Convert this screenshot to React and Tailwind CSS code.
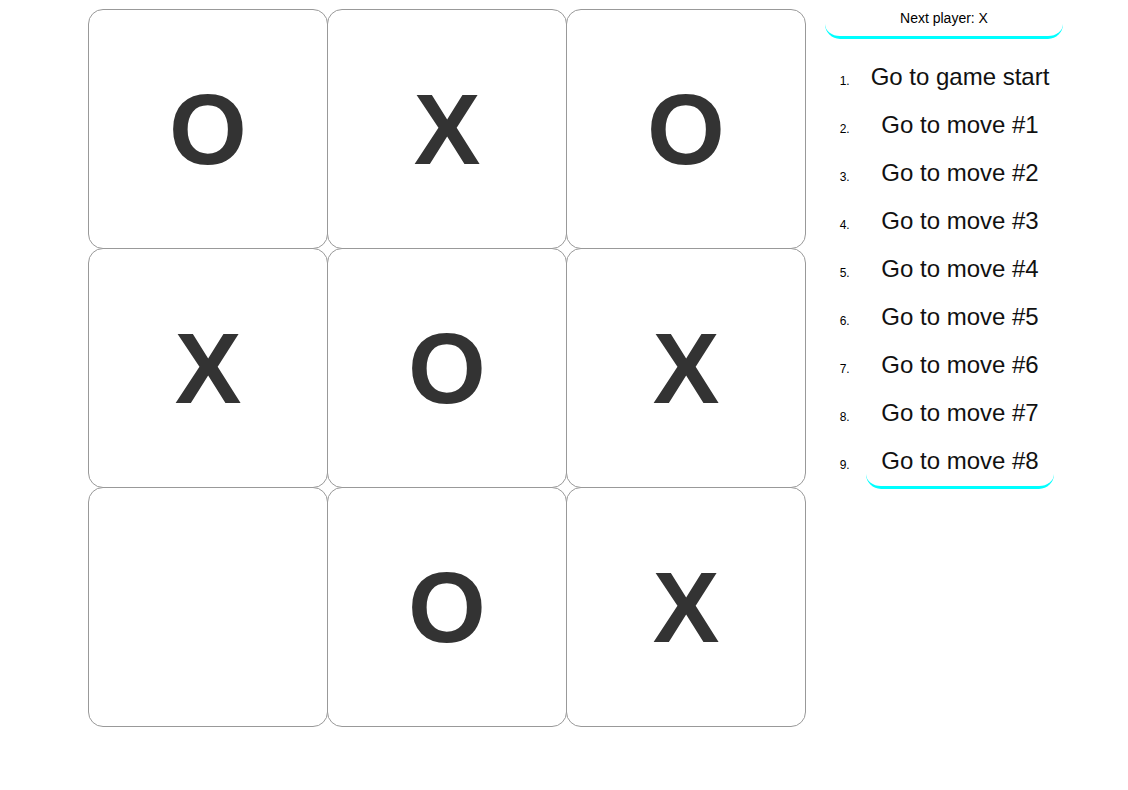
const board = ["O", "X", "O", "X", "O", "X", null, "O", "X"];

const moves = [
  "Go to game start",
  "Go to move #1",
  "Go to move #2",
  "Go to move #3",
  "Go to move #4",
  "Go to move #5",
  "Go to move #6",
  "Go to move #7",
  "Go to move #8",
];

function Square({ value, first }) {
  return (
    <button
      className={
        "w-[240px] h-[240px] flex items-center justify-center bg-white border border-[#999] rounded-[15px] text-[100px] leading-none font-bold text-[#333] " +
        (first ? "" : "-ml-px")
      }
    >
      {value}
    </button>
  );
}

export default function App() {
  const rows = [0, 1, 2];

  return (
    <div
      className="min-h-screen bg-white flex items-start pl-[88px]"
      style={{ fontFamily: '"Liberation Sans", Arial, sans-serif' }}
    >
      <div className="mt-[9px] flex flex-col">
        {rows.map((r) => (
          <div key={r} className={"flex " + (r === 0 ? "" : "-mt-px")}>
            {[0, 1, 2].map((c) => (
              <Square key={c} value={board[r * 3 + c]} first={c === 0} />
            ))}
          </div>
        ))}
      </div>

      <div className="ml-[19px] w-[238px]">
        <div className="pt-[10px] pb-[10px] text-center text-[14px] leading-[16px] text-black border-b-[3px] border-[#00ffff] rounded-b-[15px]">
          Next player: X
        </div>
        <ol className="mt-[14px] pl-[28px] -mr-[4px] list-decimal text-[12px] text-black">
          {moves.map((m, i) => (
            <li key={i} className="h-[48px] text-center">
              <button
                className={
                  "inline-block px-[15px] pt-[10px] pb-[12px] text-[24px] leading-[27px] text-[#111] rounded-b-[15px] border-b-[3px] " +
                  (i === moves.length - 1 ? "border-[#00ffff]" : "border-transparent")
                }
              >
                {m}
              </button>
            </li>
          ))}
        </ol>
      </div>
    </div>
  );
}
